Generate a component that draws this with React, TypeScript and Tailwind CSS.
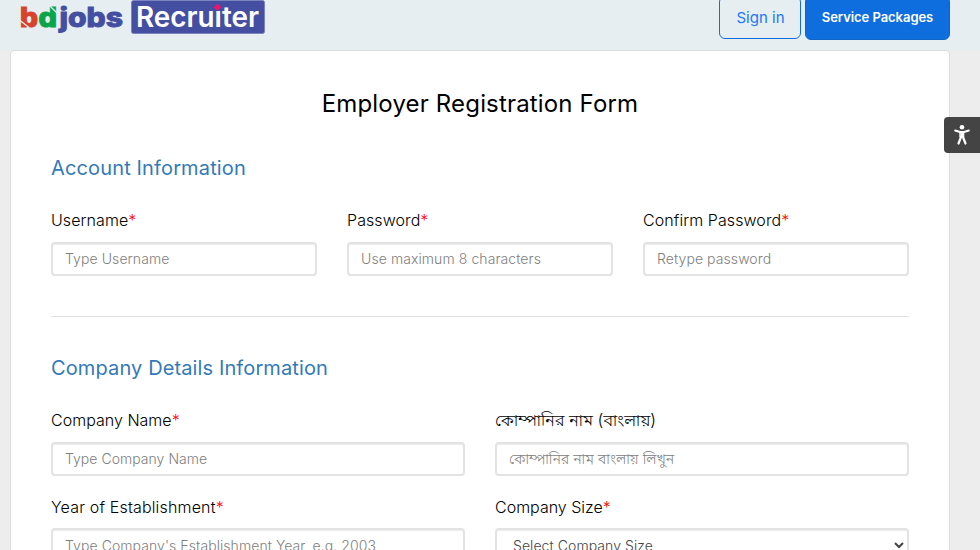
import React from 'react';

function Logo() {
  return (
    <svg width="246" height="36" viewBox="0 0 246 36" className="block overflow-visible" aria-label="bdjobs Recruiter">
      <g fontFamily="Inter, sans-serif" fontWeight="800" fontSize="26.500" strokeWidth="1.1">
        <text x="0" y="26.500" textLength="18" lengthAdjust="spacingAndGlyphs" fill="#d8432b" stroke="#d8432b">b</text>
        <text x="18.500" y="26.500" textLength="18.500" lengthAdjust="spacingAndGlyphs" fill="#0aa54b" stroke="#0aa54b">d</text>
        <text x="39.500" y="26.500" textLength="63.500" lengthAdjust="spacingAndGlyphs" fill="#444fa2" stroke="#444fa2" strokeWidth="0.9">jobs</text>
      </g>
      <path d="M0 20.500 L9 27.500" stroke="#e6eef2" strokeWidth="1.3" />
      <path d="M29.500 5.500 L37.500 13.500" stroke="#e6eef2" strokeWidth="1.2" fill="none" />
      <rect x="111.5" y="0.5" width="133" height="33" rx="2" fill="#444fa2" stroke="#7c84bf" />
      <text x="116" y="27.300" textLength="123" lengthAdjust="spacingAndGlyphs" fontFamily="Inter, sans-serif" fontWeight="600" fontSize="28" fill="#fff">Recruiter</text>
      <rect x="192.500" y="3" width="9.500" height="7.800" fill="#444fa2" />
      <path d="M197.500 3.500 L199.300 5.500 L201.300 7.300 L199.300 9.100 L197.500 11 L195.700 9.100 L193.700 7.300 L195.700 5.500Z" fill="#f0136b" />
    </svg>
  );
}

function Label({ text, required = true, className = '' }: { text: string; required?: boolean; className?: string }) {
  return (
    <label className={`block h-6 text-base leading-6 font-light whitespace-nowrap text-black ${className}`}>
      {text}
      {required && <span className="text-[#ff0000]">*</span>}
    </label>
  );
}

type FieldProps = {
  label: string;
  placeholder: string;
  required?: boolean;
  labelClass?: string;
  inputClass?: string;
};

function Field({ label, placeholder, required = true, labelClass = 'tracking-[0.08px]', inputClass = 'pb-0.5 text-sm tracking-[0.08px]' }: FieldProps) {
  return (
    <div className="min-w-0">
      <Label text={label} required={required} className={labelClass} />
      <input
        placeholder={placeholder}
        className={`mt-2.5 block h-[34px] w-full rounded-[4px] border-2 border-[#e3e3e3] bg-white px-3 font-light shadow-[inset_0_1px_1px_rgba(0,0,0,0.075)] outline-none placeholder:text-[#808080] ${inputClass}`}
      />
    </div>
  );
}

export default function App() {
  return (
    <div className="h-[550px] w-[980px] overflow-hidden bg-[#ededed] font-['Inter','Noto_Sans_Bengali','Noto_Sans',sans-serif]">
      <header className="flex h-[50px] items-start justify-between bg-[#e6eef2] pr-[30px] pl-5">
        <Logo />
        <div className="flex gap-1">
          <button className="-mt-1 h-[43px] w-[82px] rounded-md border border-[#0f6edd] pt-px pl-px text-[15px] text-[#2477f8]">Sign in</button>
          <button className="-mt-1 h-[44px] w-[145px] rounded-md border border-[#1065c9] bg-[#0f6edd] text-[13px] font-semibold tracking-[-0.05px] text-white">Service Packages</button>
        </div>
      </header>

      <main className="ml-2.5 h-[600px] w-[940px] rounded-[4px] border border-[#ddd] bg-white px-10">
        <h1 className="pt-9 text-center text-2xl leading-[34px] font-normal tracking-[0.16px] text-black">Employer Registration Form</h1>

        <section className="border-b border-[#e1e1e1] pb-10">
          <h2 className="pt-[31px] text-xl leading-8 font-normal tracking-[0.14px] text-[#337ab7]">Account Information</h2>
          <div className="mt-6 grid grid-cols-3 gap-[30px]">
            <Field label="Username" placeholder="Type Username" />
            <Field label="Password" placeholder="Use maximum 8 characters" />
            <Field label="Confirm Password" placeholder="Retype password" />
          </div>
        </section>

        <section>
          <h2 className="pt-[35px] text-xl leading-8 font-normal tracking-[0.12px] text-[#337ab7]">Company Details Information</h2>
          <div className="mt-6 grid grid-cols-2 gap-x-[30px] gap-y-[18px]">
            <Field label="Company Name" placeholder="Type Company Name" labelClass="tracking-[0.02px]" inputClass="pb-0.5 text-sm tracking-[0.03px]" />
            <Field
              label="কোম্পানির নাম (বাংলায়)"
              placeholder="কোম্পানির নাম বাংলায় লিখুন"
              required={false}
              labelClass="text-[16.6px]"
              inputClass="pb-0.5 text-[14.4px]"
            />
            <Field
              label="Year of Establishment"
              placeholder="Type Company's Establishment Year, e.g. 2003"
              labelClass="pt-px tracking-[0.17px]"
              inputClass="text-sm tracking-[0.07px]"
            />
            <div>
              <Label text="Company Size" className="pt-px" />
              <select className="mt-2.5 block h-[34px] w-full rounded-[4px] border-2 border-[#e3e3e3] bg-white px-3 text-sm font-light tracking-[0.07px] text-[#444] shadow-[inset_0_1px_1px_rgba(0,0,0,0.075)]">
                <option>Select Company Size</option>
              </select>
            </div>
          </div>
        </section>
      </main>

      <button className="absolute top-[117px] left-[944px] flex h-9 w-9 items-center justify-center rounded-l-[4px] bg-[#444]" aria-label="Accessibility">
        <svg width="18" height="22" viewBox="0 0 18 22" fill="none" stroke="#fff" strokeLinecap="round" strokeLinejoin="round">
          <circle cx="9" cy="3.200" r="2.300" fill="#fff" stroke="none" />
          <path d="M2.200 6.500 L7 8 H11 L15.800 6.500" strokeWidth="2" />
          <path d="M7.200 8 H10.800 V13 H7.200Z" fill="#fff" strokeWidth="1" />
          <path d="M8 13 L5.500 19.500 M10 13 L12.500 19.500" strokeWidth="2.200" />
        </svg>
      </button>
    </div>
  );
}
